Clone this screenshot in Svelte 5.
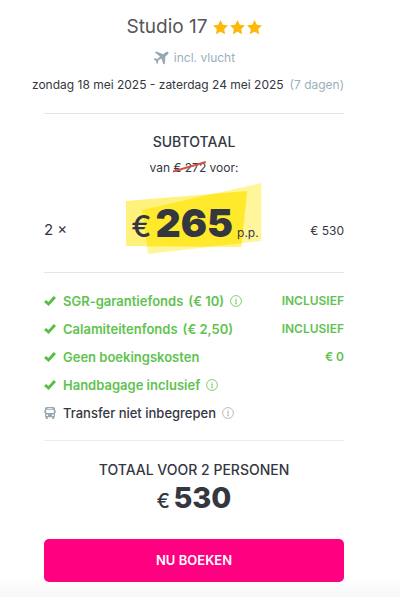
<script>
  const stars = 3;
  const persons = 2;
  const price = 265;
  const oldPrice = 272;
  const total = persons * price;

  const costs = [
    { label: 'SGR-garantiefonds', amount: '(€ 10)', value: 'INCLUSIEF', info: true, included: true },
    { label: 'Calamiteitenfonds', amount: '(€ 2,50)', value: 'INCLUSIEF', info: false, included: true },
    { label: 'Geen boekingskosten', value: '€ 0', info: false, included: true },
    { label: 'Handbagage inclusief', info: true, included: true },
    { label: 'Transfer niet inbegrepen', info: true, included: false }
  ];
</script>

<main class="summary">
  <header>
    <h1>
      Studio 17
      <span class="stars" role="img" aria-label="{stars} sterren">
        {#each Array(stars) as _}
          <svg width="15" height="15" viewBox="0 0 15 15">
            <path d="M7.5 0 9.8 4.7 15 5.4 11.2 9 12.1 14.2 7.5 11.8 2.9 14.2 3.8 9 0 5.4 5.2 4.7Z" />
          </svg>
        {/each}
      </span>
    </h1>
    <p class="flight">
      <svg width="16" height="14" viewBox="0 0 16 14">
        <path d="M15.3 1.1C14.7.4 13.4.8 12.4 1.6L10.2 3.2 3.4.6 2 1.4 7 5.5 4.5 7.9 1.5 7.3.4 8.1 3 10 3.8 13 5 12.3 5.2 9.6 8.3 7.5 10.6 13.4 12 12.6 12.3 5.6 14.4 3.7C15.4 2.8 15.8 1.7 15.3 1.1Z" />
      </svg>
      incl. vlucht
    </p>
    <p class="dates">zondag 18 mei 2025 - zaterdag 24 mei 2025 <span>(7 dagen)</span></p>
  </header>

  <section class="subtotal">
    <h2>SUBTOTAAL</h2>
    <p class="from">
      van
      <span class="old">
        € {oldPrice}
        <svg viewBox="0 0 32 12" preserveAspectRatio="none"><path d="M0 10.5 32 1" /></svg>
      </span>
      voor:
    </p>
    <div class="price-row">
      <span class="count">{persons} ×</span>
      <div class="price">
        <svg viewBox="0 0 135 71" preserveAspectRatio="none">
          <path d="M0 18 121 8 115 64 0 63Z" fill="#fff27c" />
          <path d="M16 27 135 0V58L22 71Z" fill="#fff59a" />
          <path d="M16 27 87 10.8 121 8 115.5 60.2 82 63.8 21 63.2Z" fill="#ffe92c" />
        </svg>
        <span class="euro">€</span>
        <strong>{price}</strong>
        <span class="unit">p.p.</span>
      </div>
      <span class="amount">€ {total}</span>
    </div>
  </section>

  <ul class="costs">
    {#each costs as cost}
      <li class:included={cost.included}>
        {#if cost.included}
          <svg class="mark" width="12" height="12" viewBox="0 0 12 12">
            <path d="M0 6.9 2.2 4.9 4.4 6.9 9.8 1.1 12 3.1 4.6 10.9Z" />
          </svg>
        {:else}
          <svg class="mark" width="12" height="12" viewBox="0 0 12 12">
            <path fill-rule="evenodd" d="M2.5 0H9.5Q11 0 11 1.8V9.2Q11 10 10.2 10.2V12H8.2V10.3H3.8V12H1.8V10.2Q1 10 1 9.2V1.8Q1 0 2.5 0ZM3.5 1V1.8H8.5V1ZM2.2 2.8V6H9.8V2.8ZM2.2 7.6V9H4V7.6ZM8 7.6V9H9.8V7.6ZM0 3H.6V6H0ZM11.4 3H12V6H11.4Z" />
          </svg>
        {/if}
        <span class="label">{cost.label}</span>
        {#if cost.amount}
          <span class="fee">{cost.amount}</span>
        {/if}
        {#if cost.info}
          <button class="info" aria-label="Meer informatie over {cost.label}">
            <svg width="12" height="12" viewBox="0 0 12 12">
              <circle cx="6" cy="6" r="5.4" />
              <path d="M5 5H6.5L5.6 8.7H7M6.4 2.8V3.7" />
            </svg>
          </button>
        {/if}
        {#if cost.value}
          <span class="value">{cost.value}</span>
        {/if}
      </li>
    {/each}
  </ul>

  <section class="total">
    <h2>TOTAAL VOOR {persons} PERSONEN</h2>
    <p><span>€</span> <strong>{total}</strong></p>
  </section>

  <button class="book">NU BOEKEN</button>
</main>

<style>
  :global(body) {
    margin: 0;
    background: #fff;
  }

  .summary {
    padding: 12px 56px 15px 44px;
    font-family: Inter, "Liberation Sans", sans-serif;
    font-size: 12px;
    line-height: 20px;
    color: #34373f;
    background: linear-gradient(to top, #f8f8f8, #fff 20px);
  }

  h1, h2, p, ul {
    margin: 0;
    padding: 0;
    font-weight: 400;
  }

  header {
    border-bottom: 1px solid #dde8ee;
    padding-bottom: 18px;
  }

  h1 {
    display: flex;
    justify-content: center;
    align-items: center;
    gap: 5px;
    font-size: 19px;
    line-height: 30px;
    color: #55565a;
  }

  .stars {
    display: flex;
    gap: 2px;
    fill: #fdb909;
  }

  .flight {
    display: flex;
    justify-content: center;
    align-items: center;
    gap: 5px;
    margin-top: 6px;
    color: #9ab0be;
  }

  .flight svg {
    fill: #96a9b2;
  }

  .dates {
    display: flex;
    justify-content: center;
    gap: 6px;
    margin: 7px 0 0 -12px;
    white-space: nowrap;
  }

  .dates span {
    color: #9ab0be;
  }

  h2 {
    font-size: 14px;
    font-weight: 500;
    text-align: center;
  }

  .subtotal {
    padding: 18px 0;
    border-bottom: 1px solid #dde8ee;
  }

  .from {
    margin-top: 6px;
    text-align: center;
  }

  .old {
    display: inline-block;
    position: relative;
  }

  .old svg {
    position: absolute;
    left: 0;
    top: 3px;
    width: 100%;
    height: 12px;
    fill: none;
    stroke: #d4513d;
    stroke-width: 2;
  }

  .price-row {
    display: grid;
    grid-template-columns: 1fr auto 1fr;
    align-items: end;
    margin-top: 5px;
  }

  .count {
    padding-bottom: 14px;
    font-size: 15px;
  }

  .price {
    position: relative;
    display: flex;
    align-items: baseline;
    gap: 4px;
    padding: 15px 3px 6px 5px;
  }

  .price svg {
    position: absolute;
    inset: 0;
    width: 100%;
    height: 100%;
  }

  .price span, .price strong {
    position: relative;
  }

  .euro {
    font-size: 30px;
    font-weight: 500;
  }

  .price strong {
    font-size: 39px;
    font-weight: 900;
    line-height: 50px;
  }

  .amount {
    padding-bottom: 13px;
    text-align: right;
  }

  .costs {
    display: grid;
    gap: 8px;
    padding: 18px 0 17px;
    border-bottom: 1px solid #e6f0f4;
    list-style: none;
  }

  li {
    display: flex;
    align-items: center;
    font-size: 13px;
    font-weight: 500;
    white-space: nowrap;
  }

  li.included {
    font-weight: 600;
    color: #61c24f;
  }

  .mark {
    margin-right: 7px;
    fill: #96a9b2;
  }

  .included .mark {
    fill: #57bf45;
  }

  .fee {
    margin-left: 5px;
  }

  .info {
    display: flex;
    margin-left: 6px;
    padding: 0;
    border: 0;
    background: none;
    color: #a2abb2;
    cursor: pointer;
  }

  .included .info {
    color: inherit;
  }

  .info svg {
    fill: none;
    stroke: currentColor;
    stroke-width: 0.8;
  }

  .value {
    margin-left: auto;
    font-size: 12px;
  }

  .total {
    padding: 19px 0 17px;
    text-align: center;
  }

  .total p {
    line-height: 36px;
  }

  .total span {
    font-size: 20px;
    font-weight: 500;
  }

  .total strong {
    font-size: 29px;
    font-weight: 800;
  }

  .book {
    width: 100%;
    padding: 12px;
    border: 0;
    border-radius: 5px;
    background: #ff0080;
    color: #fff;
    font: 600 13px/19px Inter, "Liberation Sans", sans-serif;
    cursor: pointer;
  }
</style>
